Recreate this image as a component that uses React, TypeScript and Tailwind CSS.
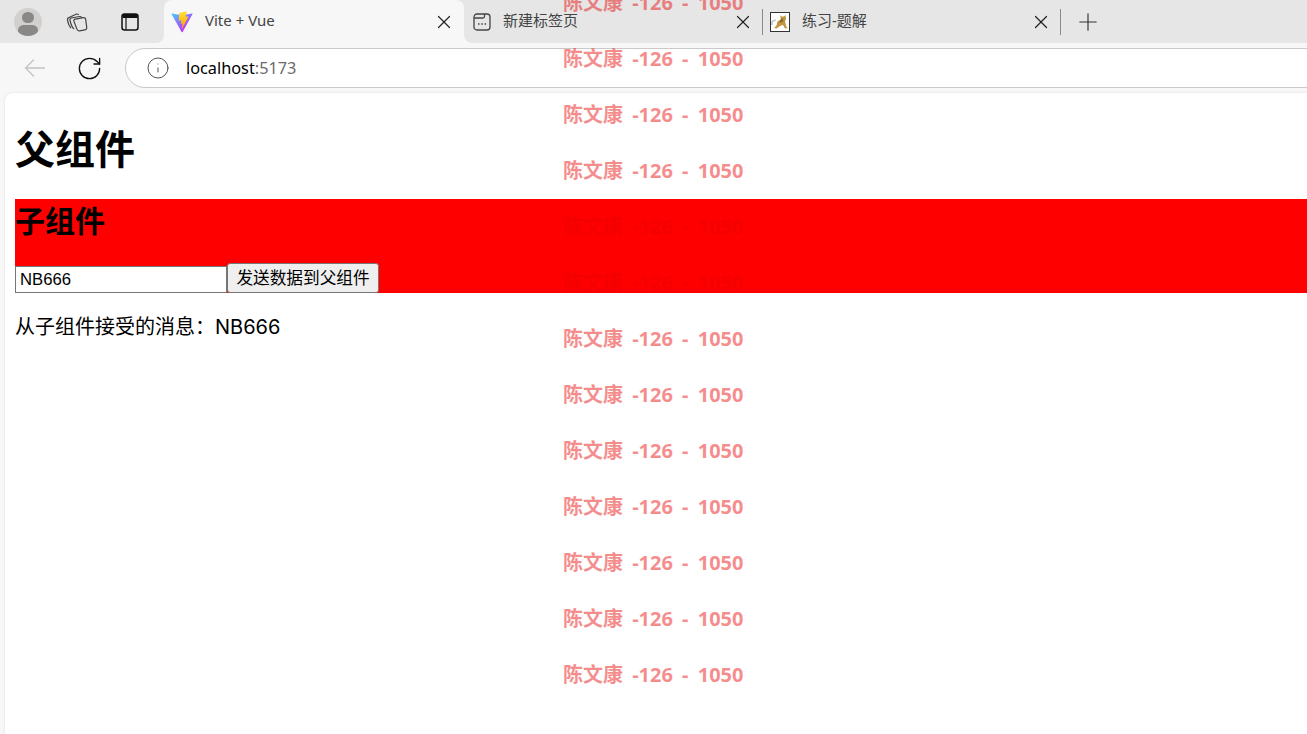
import { type FC, type ReactNode } from 'react'
import { X, Plus, RotateCw, Info } from 'lucide-react'

const cjk = 'font-["Noto_Sans","Noto_Sans_CJK_SC",sans-serif]'

const ViteLogo: FC = () => (
  <svg width="22" height="22" viewBox="0 0 410 404" className="shrink-0">
    <defs>
      <linearGradient id="vite-a" x1="6" y1="33" x2="235" y2="344" gradientUnits="userSpaceOnUse">
        <stop stopColor="#41D1FF" />
        <stop offset="1" stopColor="#BD34FE" />
      </linearGradient>
      <linearGradient id="vite-b" x1="194" y1="8" x2="236" y2="292" gradientUnits="userSpaceOnUse">
        <stop stopColor="#FFEA83" />
        <stop offset="0.08" stopColor="#FFDD35" />
        <stop offset="1" stopColor="#FFA800" />
      </linearGradient>
    </defs>
    <path d="M399.6 59.5 215.9 388c-3.8 6.8-13.5 6.8-17.4.1L11.2 59.5C7 52.2 13.3 43.3 21.6 44.8l183.9 32.9c1.2.2 2.4.2 3.6 0l180-32.8c8.3-1.5 14.7 7.3 10.5 14.6Z" fill="url(#vite-a)" />
    <path d="M292.9 1.6 156.9 28.2c-2.2.4-3.9 2.3-4 4.6l-8.4 141.3c-.2 3.3 2.9 5.9 6.1 5.2l37.9-8.8c3.5-.8 6.7 2.3 6 5.9l-11.3 55.2c-.8 3.7 2.7 6.9 6.3 5.8l23.4-7.1c3.6-1.1 7.1 2.1 6.3 5.8l-17.9 86.6c-1.1 5.4 6.1 8.4 9.1 3.7l2-3.1 110.9-221.3c1.900-3.7-1.300-7.900-5.400-7.100l-39 7.500c-3.700.7-6.800-2.700-5.800-6.300l25.500-88.200c1-3.700-2.200-7.100-5.900-6.400Z" fill="url(#vite-b)" />
  </svg>
)

// small tomcat favicon
const TomcatIcon: FC = () => (
  <svg width="20" height="20" viewBox="0 0 20 20" className="shrink-0">
    <rect x="0.5" y="0.5" width="19" height="19" fill="#fff" stroke="#333" />
    <path d="M2 13c-.8-3 1-5 4-5" fill="none" stroke="#aaa" strokeWidth="1.200" />
    <path d="M10 3l1.500 1.500h2.500l1.500-1.500.5 4-1 2.500 1.500 5.500 1.500 1-3 .5-2-3.500-3 1-3.500 2.500-2.500-.5 2.500-2.500 1-4 3.500-2Z" fill="#c2963f" />
    <path d="M12 6l1.500 3-3 2-1-2Z" fill="#8a6a2a" />
  </svg>
)

const CollectionsIcon: FC = () => (
  <svg width="22" height="22" viewBox="0 0 22 22" fill="none" stroke="#444" strokeWidth="1.200" className="shrink-0">
    <path d="M9.300 8.200l8-1.500c1.300-.2 2.200.5 2.400 1.700l1 8c.2 1.300-.5 2.200-1.700 2.400l-5.500 1c-1.300.2-2.200-.5-2.600-1.700l-3-8c-.3-1 .2-1.700 1.400-1.900Z" />
    <path d="M8 18c-2-1.500-3-4.500-4-8.500-.3-1.300.3-2.300 1.500-2.500l8-1.500c.9-.1 1.700.2 2.100 1" />
    <path d="M5 17c-2-2-3-5-3.500-8-.2-1.300.4-2.200 1.500-2.400L10.500 3c1-.1 1.700.2 2.200 1" />
  </svg>
)

const VerticalTabsIcon: FC = () => (
  <svg width="18" height="18" viewBox="0 0 18 18" fill="none" className="shrink-0">
    <rect x="1" y="1" width="16" height="16" rx="2.500" stroke="#111" strokeWidth="1.500" />
    <path d="M1.500 2.500c0-1 .5-1.500 1.500-1.500h12c1 0 1.500.5 1.500 1.500V5h-15Z" fill="#111" />
    <path d="M5 5v12" stroke="#111" strokeWidth="1.200" />
  </svg>
)

const BackIcon: FC = () => (
  <svg width="22" height="20" viewBox="0 0 22 20" fill="none" stroke="#c4c4c4" strokeWidth="1.300" className="shrink-0">
    <path d="M21 10H1.500M10 1.500 1.500 10 10 18.500" />
  </svg>
)

const ProfileIcon: FC = () => (
  <div className="w-7 h-7 shrink-0 rounded-full bg-[#d2d0ce] overflow-hidden flex flex-col items-center">
    <div className="w-[12px] h-[12px] rounded-full bg-[#8a8886] mt-[4px]" />
    <div className="w-[20px] h-[12px] rounded-full bg-[#8a8886] mt-[2px]" />
  </div>
)

const NewTabIcon: FC = () => (
  <svg width="18" height="18" viewBox="0 0 18 18" fill="none" stroke="#444" strokeWidth="1.300" className="shrink-0">
    <rect x="1" y="1" width="16" height="16" rx="3" />
    <path d="M1 5h9c1 0 1.500-.5 1.500-1.500V1" />
    <path d="M5 11h1.500M8.300 11h1.500M11.600 11h1.500" strokeWidth="1.600" />
  </svg>
)

const Tab: FC<{ icon: ReactNode; title: string; width: string; gap: string; pad: string }> = ({ icon, title, width, gap, pad }) => (
  <div className={`flex items-center h-[43px] shrink-0 ${width} ${pad}`}>
    {icon}
    <span className={`${gap} text-[15px] text-[#444] ${cjk} flex-1 -mt-[2px]`}>{title}</span>
    <X size={22} strokeWidth={1.300} className="text-[#222] shrink-0" />
  </div>
)

const Watermark: FC = () => (
  <div className="absolute top-[-11px] left-[563px] flex flex-col gap-[28px] pointer-events-none">
    {Array.from({ length: 13 }).map((_, i) => (
      <div key={i} className={`h-[28px] leading-[28px] text-[20px] font-bold whitespace-nowrap [word-spacing:4px] text-[#ea0000]/45 ${cjk}`}>
        陈文康 -126 - 1050
      </div>
    ))}
  </div>
)

export default function App() {
  return (
    <div className="relative w-[1307px] h-[734px] overflow-hidden bg-[#f7f7f7]">
      {/* tab strip */}
      <div className="flex h-[43px] bg-[#f7f7f7]">
        <div className="w-[164px] shrink-0 flex items-center bg-[#e6e6e6] rounded-br-lg pl-[14px]">
          <ProfileIcon />
          <div className="ml-[24px]"><CollectionsIcon /></div>
          <div className="ml-[33px]"><VerticalTabsIcon /></div>
        </div>
        <div className="w-[300px] shrink-0 bg-[#e6e6e6]">
          <div className="h-[43px] rounded-t-lg bg-[#f7f7f7]">
            <Tab icon={<ViteLogo />} title="Vite + Vue" width="w-[300px]" gap="ml-[12px]" pad="pl-[7px] pr-[9px]" />
          </div>
        </div>
        <div className="flex-1 flex items-center bg-[#e6e6e6] rounded-bl-lg">
          <Tab icon={<NewTabIcon />} title="新建标签页" width="w-[298px]" gap="ml-[12px]" pad="pl-[9px] pr-[8px]" />
          <div className="w-px h-[26px] bg-[#8a8a8a]" />
          <Tab icon={<TomcatIcon />} title="练习-题解" width="w-[297px]" gap="ml-[12px]" pad="pl-[7px] pr-[8px]" />
          <div className="w-px h-[26px] bg-[#8a8a8a]" />
          <Plus size={28} strokeWidth={1} className="ml-[13px] text-[#333] shrink-0" />
        </div>
      </div>

      {/* address bar */}
      <div className="flex items-center h-[50px] pl-[24px]">
        <BackIcon />
        <RotateCw size={27} strokeWidth={1.200} className="ml-[30px] text-[#111] shrink-0" />
        <div className="ml-[22px] w-[1300px] shrink-0 h-[40px] flex items-center rounded-l-[20px] bg-white border border-[#c9c9c9] pl-[20px]">
          <Info size={24} strokeWidth={1} className="text-[#555] shrink-0" />
          <span className="ml-[16px] text-[16.3px] text-black font-['Noto_Sans',sans-serif]">
            localhost<span className="text-[#6b6b6b]">:5173</span>
          </span>
        </div>
      </div>

      {/* page */}
      <div className={`ml-[5px] h-[641px] bg-white rounded-tl-lg pl-[10px] text-[20px] text-black ${cjk} shadow-[0_0_2px_rgba(0,0,0,0.15)]`}>
        <h1 className="text-[40px] leading-[50px] font-bold pt-[31px]">父组件</h1>
        <div className="mt-[25px] h-[94px] bg-[#ff0000] flex flex-col">
          <h2 className="text-[30px] leading-[44px] font-bold">子组件</h2>
          <div className="mt-auto flex items-end">
            <input
              readOnly
              value="NB666"
              className="w-[212px] h-[27px] bg-white border border-[#767676] pl-[4px] pr-[3px] text-[16.67px] font-['Liberation_Sans',sans-serif] text-black outline-none"
            />
            <button className="w-[152px] h-[30px] bg-[#efefef] border border-[#767676] rounded-[3px] text-[16.67px] leading-[26px] text-black">
              发送数据到父组件
            </button>
          </div>
        </div>
        <p className="mt-[19px] leading-[30px] font-['Inter','Noto_Sans_CJK_SC',sans-serif]">从子组件接受的消息：NB666</p>
      </div>

      <Watermark />
    </div>
  )
}
